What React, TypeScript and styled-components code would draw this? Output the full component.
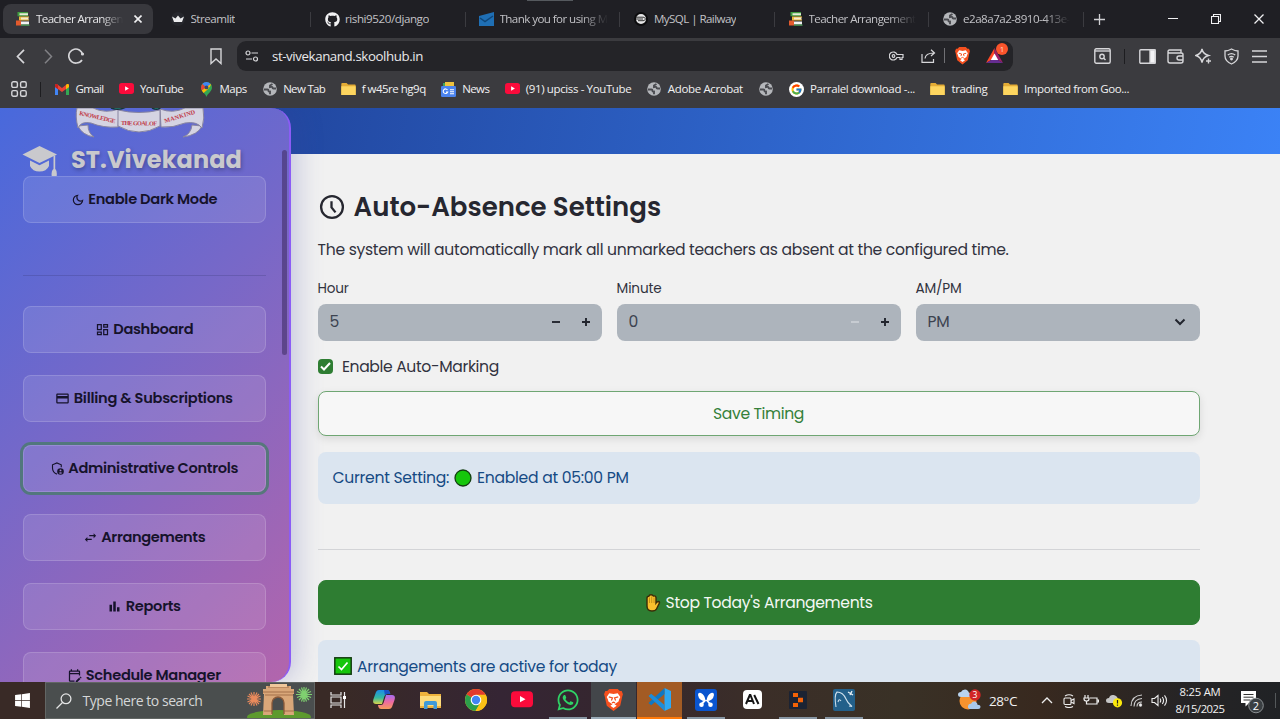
import React, { useLayoutEffect, useRef, useState } from "react";
import styled, { createGlobalStyle, css } from "styled-components";
import { FaGithub, FaWhatsapp, FaWindows } from "react-icons/fa";
import { FcGoogle } from "react-icons/fc";
import {
  MdOutlineDarkMode,
  MdOutlineDashboard,
  MdCreditCard,
  MdSwapHoriz,
  MdBarChart,
  MdOutlineEditCalendar,
} from "react-icons/md";

const appFont = `Poppins, Inter, "Open Sans", sans-serif`;
const uiFont = `"Segoe UI", "Open Sans", "Noto Sans", sans-serif`;

const GlobalStyle = createGlobalStyle`
  * { box-sizing: border-box; }
  body { margin: 0; background: #f1f1f1; overflow: hidden; }
  svg { display: block; flex: none; }
`;

/* ---------- text that keeps a set width ---------- */

const Line = styled.span`
  display: inline-block;
  flex: none;
  white-space: pre;
`;

function Fit({ w, children }: { w: number; children: string }) {
  const ref = useRef<HTMLSpanElement>(null);
  const [spacing, setSpacing] = useState(0);
  useLayoutEffect(() => {
    if (ref.current) {
      const natural = ref.current.getBoundingClientRect().width;
      setSpacing((w - natural) / children.length);
    }
  }, []);
  return (
    <Line ref={ref} style={{ letterSpacing: `${spacing}px` }}>
      {children}
    </Line>
  );
}

/* ---------- page shell ---------- */

const Screen = styled.div`
  width: 1280px;
  height: 719px;
  display: flex;
  flex-direction: column;
  overflow: hidden;
  font-family: ${uiFont};
`;

/* ---------- browser chrome ---------- */

const TabStrip = styled.div`
  position: relative;
  height: 38px;
  flex: none;
  display: flex;
  align-items: center;
  padding: 0 0 0 3px;
  background: #1f1f24;
  color: #c2c2c6;
  font-size: 11.6px;
  &::before {
    content: "";
    position: absolute;
    top: 0;
    left: 527px;
    width: 46px;
    height: 1px;
    background: #55595e;
  }
`;

const Tab = styled.div<{ $active?: boolean; $line?: boolean }>`
  width: 154.5px;
  height: 30px;
  flex: none;
  display: flex;
  align-items: center;
  ${(p) =>
    p.$active &&
    css`
      width: 150px;
      margin-right: 4.5px;
      border-radius: 8px;
      background: #38383d;
      color: #e6e6e8;
    `}
  &::after {
    content: "";
    width: 1px;
    height: 15px;
    margin-left: auto;
    margin-right: 1px;
    background: ${(p) => (p.$line ? "#3b3b40" : "transparent")};
  }
`;

const TabIcon = styled.span`
  width: 14px;
  margin: 0 6px 0 13px;
  display: flex;
  justify-content: center;
`;

const TabTitle = styled.span<{ $w: number; $fade?: boolean }>`
  width: ${(p) => p.$w}px;
  padding-bottom: 2px;
  overflow: hidden;
  display: flex;
  ${(p) =>
    p.$fade &&
    css`
      mask-image: linear-gradient(90deg, #000 75%, transparent);
    `}
`;

const CloseSlot = styled.span`
  margin-left: 11px;
`;

const WindowButtons = styled.div`
  margin-left: auto;
  display: flex;
`;

const WindowButton = styled.span`
  width: 43px;
  display: flex;
  align-items: center;
  justify-content: center;
`;

const NewTab = styled.span`
  margin-left: 9px;
`;

const Toolbar = styled.div`
  height: 36px;
  flex: none;
  display: flex;
  align-items: center;
  padding: 0 6px 0 6.500px;
  background: #3b3b3f;
`;

const ToolSlot = styled.span<{ $push?: number }>`
  width: 28px;
  flex: none;
  display: flex;
  justify-content: center;
  margin-left: ${(p) => p.$push ?? 0}px;
`;

const AddressBar = styled.div`
  width: 776px;
  height: 30px;
  margin-left: 7.500px;
  padding-left: 8px;
  display: flex;
  align-items: center;
  border-radius: 9px;
  background: #242428;
  color: #e9e9eb;
  font-size: 13.3px;
`;

const AddressText = styled.span`
  margin-left: 13px;
`;

const AddressTools = styled.div`
  margin-left: auto;
  display: flex;
  align-items: center;
  padding-right: 5px;
`;

const AddressTool = styled.span<{ $w: number }>`
  position: relative;
  width: ${(p) => p.$w}px;
  display: flex;
  justify-content: center;
`;

const Badge = styled.span`
  position: absolute;
  top: -5px;
  right: 0;
  width: 12px;
  height: 12px;
  border-radius: 6px;
  background: #fb542b;
  color: #ffd9cc;
  font-size: 8px;
  line-height: 12px;
  text-align: center;
`;

const VerticalRule = styled.span<{ $color: string }>`
  width: 1px;
  height: 15px;
  flex: none;
  background: ${(p) => p.$color};
`;

const Bookmarks = styled.div`
  height: 34px;
  flex: none;
  display: flex;
  align-items: center;
  padding: 0 0 4px 11px;
  background: #3b3b3f;
  color: #f1f1f2;
  font-size: 11.5px;
`;

const BookmarkList = styled.div`
  display: flex;
  gap: 15.55px;
  margin-left: 0.5px;
`;

const Bookmark = styled.span`
  display: flex;
  align-items: center;
  gap: 6px;
`;

const BookmarkLabel = styled.span`
  line-height: 16px;
  padding-bottom: 0.5px;
`;

const BookmarkIcon = styled.span`
  width: 15px;
  display: flex;
  justify-content: center;
`;

/* ---------- web page ---------- */

const Page = styled.div`
  height: 574px;
  flex: none;
  display: flex;
  overflow: hidden;
  font-family: ${appFont};
  background: linear-gradient(100deg, #21469e 20%, #3b82f6 100%) 0 0 / 100% 46px no-repeat, #f1f1f1;
`;

const Sidebar = styled.aside`
  position: relative;
  width: 291px;
  height: 574px;
  flex: none;
  padding: 0 24px 0 22.500px;
  overflow: hidden;
  border-right: 2px solid #8b5cf6;
  border-radius: 0 20px 20px 0;
  background: linear-gradient(135deg, #4869dc 0%, #7768c8 45%, #b365ac 100%);
`;

const SidebarShade = styled.div`
  display: flex;
  flex: none;
  border-radius: 0 20px 20px 0;
  box-shadow: 4px 0 28px rgba(60, 70, 160, 0.28);
`;

const Crest = styled.div`
  height: 31px;
  margin-left: 52.500px;
`;

const Brand = styled.div`
  height: 37px;
  display: flex;
  align-items: flex-start;
  color: #c9c9cd;
  font-size: 24px;
  font-weight: 700;
  line-height: 30px;
  text-shadow: 1px 2px 4px rgba(0, 0, 0, 0.28);
`;

const BrandName = styled.span`
  margin: 6px 0 0 13.500px;
`;

const CapSlot = styled.span`
  margin: 7px 0 0 -1px;
`;

const NavDivider = styled.div`
  height: 1px;
  width: 243px;
  margin: 52px 0 30px;
  background: rgba(50, 50, 110, 0.25);
`;

const NavList = styled.nav`
  display: flex;
  flex-direction: column;
  gap: 22.3px;
`;

const NavButton = styled.div<{ $focused?: boolean }>`
  height: 47px;
  width: 243px;
  flex: none;
  display: flex;
  align-items: center;
  justify-content: center;
  gap: 3.5px;
  border: 1px solid rgba(255, 255, 255, 0.15);
  border-radius: 8px;
  background: rgba(255, 255, 255, 0.1);
  color: #16132b;
  font-size: 14.6px;
  font-weight: 600;
  ${(p) =>
    p.$focused &&
    css`
      box-shadow: 0 0 0 3px rgba(75, 122, 112, 0.85);
    `}
`;

const ScrollThumb = styled.div`
  position: absolute;
  top: 42px;
  right: 2px;
  width: 5px;
  height: 205px;
  border-radius: 3px;
  background: rgba(70, 50, 110, 0.65);
`;

const Content = styled.main`
  width: 908.500px;
  padding-left: 26.600px;
  padding-top: 46px;
  color: #31333f;
  font-size: 15.6px;
`;

const Heading = styled.h2`
  display: flex;
  align-items: center;
  gap: 9px;
  height: 40px;
  margin: 33px 0 0;
  font-size: 26px;
  font-weight: 600;
  color: #262730;
`;

const Lead = styled.p`
  height: 24px;
  line-height: 24px;
  margin: 11px 0 0;
`;

const Fields = styled.div`
  display: grid;
  grid-template-columns: 1fr 1fr 1fr;
  gap: 15px;
  margin-top: 17px;
`;

const Field = styled.div`
  display: flex;
  flex-direction: column;
`;

const FieldLabel = styled.label`
  height: 24.5px;
  line-height: 20px;
  font-size: 13.6px;
`;

const Control = styled.div`
  height: 37.5px;
  display: flex;
  align-items: center;
  padding: 0 11px 1px 12px;
  border-radius: 8px;
  background: #adb4bc;
  color: #3c4350;
`;

const Steppers = styled.span<{ $inset?: number }>`
  margin-left: auto;
  margin-right: ${(p) => p.$inset ?? 0}px;
  display: flex;
  gap: 20px;
`;

const CheckRow = styled.label`
  display: flex;
  align-items: center;
  gap: 9.3px;
  height: 24px;
  margin-top: 13px;
`;

const CheckBox = styled.span`
  width: 15px;
  height: 15px;
  border-radius: 4px;
  display: flex;
  align-items: center;
  justify-content: center;
  background: #2e7d32;
`;

const Button = styled.div<{ $filled?: boolean }>`
  height: 45px;
  display: flex;
  align-items: center;
  justify-content: center;
  gap: 5px;
  margin-top: ${(p) => (p.$filled ? 30 : 12.5)}px;
  border: 1px solid ${(p) => (p.$filled ? "#2e7d32" : "#6fa673")};
  border-radius: 8px;
  background: ${(p) => (p.$filled ? "#2e7d32" : "#f7f7f7")};
  color: ${(p) => (p.$filled ? "#f4f8f4" : "#34803a")};
  box-shadow: ${(p) => (p.$filled ? "none" : "0 3px 9px rgba(0,0,0,0.1)")};
`;

const Notice = styled.div<{ $gap: number; $indent: number }>`
  height: 52px;
  display: flex;
  align-items: center;
  margin-top: ${(p) => p.$gap}px;
  padding-left: ${(p) => p.$indent}px;
  gap: 5px;
  border-radius: 8px;
  background: #dbe5f0;
  color: #154a84;
`;

const Divider = styled.div`
  height: 1px;
  margin-top: 45.5px;
  background: #d3d4d7;
`;

/* ---------- taskbar ---------- */

const Taskbar = styled.footer`
  height: 37px;
  flex: none;
  display: flex;
  align-items: stretch;
  background: linear-gradient(90deg, #392a26 0, #392a26 340px, #352534 500px, #35262f 600px, #3b2e28 760px, #393126 900px, #38291f 1040px, #262425 1180px, #202225 1280px);
  color: #f2f2f2;
`;

const StartButton = styled.div`
  width: 45px;
  display: flex;
  align-items: center;
  justify-content: center;
`;

const SearchBox = styled.div`
  width: 270px;
  display: flex;
  align-items: center;
  padding-left: 10px;
  background: #4a4e4e;
  border: 1px solid #626664;
  color: #d5d7d7;
  font-size: 14px;
`;

const SearchText = styled.span`
  margin-left: 10.5px;
`;

const SearchArt = styled.span`
  margin-left: auto;
  align-self: flex-end;
`;

const TaskSlot = styled.div<{ $bg?: string; $line?: string; $wide?: boolean }>`
  width: 46px;
  flex: none;
  display: flex;
  flex-direction: column;
  align-items: center;
  justify-content: space-between;
  background: ${(p) => p.$bg ?? "transparent"};
  background-clip: content-box;
  padding-right: ${(p) => (p.$bg ? 1 : 0)}px;
  &::after {
    content: "";
    width: ${(p) => (p.$wide ? "100%" : "38px")};
    height: 2px;
    background: ${(p) => p.$line ?? "transparent"};
  }
`;

const TaskIcon = styled.span`
  height: 36px;
  display: flex;
  align-items: center;
`;

const Tray = styled.div`
  margin-left: auto;
  display: flex;
  align-items: center;
  font-size: 13.5px;
`;

const TraySlot = styled.span<{ $w: number }>`
  width: ${(p) => p.$w}px;
  flex: none;
  display: flex;
  justify-content: center;
`;

const Temperature = styled(TraySlot)`
  margin-right: 12px;
`;

const ClockStack = styled.div`
  width: 60px;
  margin-left: 2px;
  padding-bottom: 2px;
  display: flex;
  flex-direction: column;
  align-items: center;
  font-size: 11.3px;
  line-height: 17px;
`;

/* ---------- drawings ---------- */

const stroke = { fill: "none", stroke: "#d6d6d9", strokeWidth: 1.4 };

const Books = () => (
  <svg width="14" height="14" viewBox="0 0 14 14">
    <path d="M3 1h9v3H3z" fill="#e4ecd8" />
    <path d="M1.500 0h10.500v1.300H3.500v2H12v1H1.500z" fill="#3f9b3f" />
    <path d="M4 5h8.500v3H4z" fill="#f3ead0" />
    <path d="M3 4.500h10v1H5v2h8v1H3z" fill="#e8b93b" />
    <path d="M2 9.500h11v3H2z" fill="#f2f2f2" />
    <path d="M0 8.500h5v5H0z" fill="#e35a2d" />
    <path d="M5 12.500h8.500v1.300H5z" fill="#4a9a54" />
  </svg>
);

const Crown = () => (
  <svg width="14" height="14" viewBox="0 0 14 14">
    <circle cx="7" cy="7" r="7" fill="#26272d" />
    <path d="M1 4.500l3.500 2L7 3.500l2.500 3 3.500-2-2 5.500H3z" fill="#ececee" />
  </svg>
);

const Mail = () => (
  <svg width="15" height="14" viewBox="0 0 15 14">
    <path d="M0 4L15 0v14H0z" fill="#1f6fb5" />
    <path d="M1 6l5 3.500L14 4" fill="none" stroke="#0e4679" strokeWidth="1.500" />
  </svg>
);

const Railway = () => (
  <svg width="14" height="14" viewBox="0 0 14 14">
    <circle cx="7" cy="7" r="6" fill="#e6e6e8" stroke="#0c0c0e" strokeWidth="2" />
    <path d="M2 5.200h7c3 0 3 3.500 0 3.500H4M2 7h7" fill="none" stroke="#333" strokeWidth="1" />
  </svg>
);

const Globe = () => (
  <svg width="14" height="14" viewBox="0 0 14 14">
    <circle cx="7" cy="7" r="6.800" fill="#b4b6ba" />
    <path d="M1 7.500h3.500q1 0 1 1.200t1.500 1v2.500M13 6.500h-2.500q-1 0-1-1T7 5V3.500L9.500 2" fill="none" stroke="#4a4b50" strokeWidth="1.900" />
  </svg>
);

const YouTube = ({ w = 15 }: { w?: number }) => (
  <svg width={w} height={w * 0.74} viewBox="0 0 22 16">
    <rect width="22" height="16" rx="4" fill="#fb0b3b" />
    <path d="M9 4.800v6.400L14.500 8z" fill="#fff" />
  </svg>
);

const Folder = () => (
  <svg width="15" height="12.500" viewBox="0 0 15 13">
    <path d="M1 0h4.500L7 1.600h7a1 1 0 011 1V12a1 1 0 01-1 1H1a1 1 0 01-1-1V1a1 1 0 011-1z" fill="#e4ac35" />
    <path d="M0 3.400h15V12a1 1 0 01-1 1H1a1 1 0 01-1-1z" fill="#fdd55f" />
  </svg>
);

const Gmail = () => (
  <svg width="14" height="11" viewBox="0 0 14 11">
    <path d="M0 1.500V11h3V5z" fill="#4285f4" />
    <path d="M14 1.500V11h-3V5z" fill="#34a853" />
    <path d="M0 1.500C0 0 1.500-.4 2.500.5L7 4 11.500.5C12.500-.4 14 0 14 1.500V3L7 8 0 3z" fill="#ea4335" />
    <path d="M11 1l.5-.5C12.500-.4 14 0 14 1.500V3l-3 2.200z" fill="#fbbc04" />
    <path d="M0 1.500C0 0 1.500-.4 2.500.5L3 1v4.200L0 3z" fill="#c5221f" />
  </svg>
);

const MapPin = () => (
  <svg width="11" height="15" viewBox="0 0 11 15">
    <path d="M5.500 15C5 12 0 9.500 0 5.500A5.500 5.500 0 0111 5.500C11 9.500 6 12 5.500 15z" fill="#34a853" />
    <path d="M1.300 2L5.500 5.500 9.600 1.900A5.500 5.500 0 001.300 2z" fill="#4285f4" />
    <path d="M1.300 2L5 5.500.8 8.500C-.3 6.500-.2 4 1.300 2z" fill="#ea4335" />
    <path d="M.8 8.500L9.600 1.900C10.500 3 8 6 6 8L2.500 11z" fill="#fbbc04" />
    <circle cx="5.500" cy="5.400" r="1.900" fill="#3a4a6b" />
  </svg>
);

const NewsIcon = () => (
  <svg width="15" height="15" viewBox="0 0 15 15">
    <path d="M2 1h11v5H2z" fill="#3fa45b" />
    <path d="M4 0h9v5H4z" fill="#edc13d" />
    <rect y="4" width="15" height="11" rx="1.200" fill="#4b83ee" />
    <path d="M6.500 8A2.300 2.300 0 106.700 10H5M9 7.700h4M9 9.700h4M9 11.700h4" fill="none" stroke="#fff" strokeWidth="1.100" />
  </svg>
);

const GoogleBadge = () => (
  <svg width="15" height="15" viewBox="0 0 15 15">
    <circle cx="7.500" cy="7.500" r="7.500" fill="#fff" />
    <g transform="translate(1.500 1.500)">
      <FcGoogle size={12} />
    </g>
  </svg>
);

const BraveLion = ({ size }: { size: number }) => (
  <svg width={size} height={size * 1.16} viewBox="0 0 18 21">
    <path d="M5 0h8l2 2 1.800 0L18 5l-.6 2-2 9L9 21l-6.400-5-2-9L0 5l1.200-3L3 2z" fill="#f5501f" />
    <path d="M5 4l4 .8L13 4l2.500 3.600-1 2L13.800 12 10 14.500 12 16l-3 2-3-2 2-1.500L4.200 12l-.7-2.400-1-2z" fill="#fff" />
    <path d="M4.500 7.500L8 8.500 7 11M13.500 7.500L10 8.500 11 11M7.500 13.200L9 12.500l1.500.7" stroke="#f5501f" strokeWidth="1.200" fill="none" />
  </svg>
);

const BatTriangle = () => (
  <svg width="17" height="15" viewBox="0 0 17 15">
    <path d="M8.500 0L0 15l8.500-5z" fill="#ff4724" />
    <path d="M8.500 0L17 15l-8.500-5z" fill="#9e1f63" />
    <path d="M0 15h17l-8.500-5z" fill="#662d91" />
    <path d="M8.500 5.500L4.800 12h7.400z" fill="#fff" />
  </svg>
);

const Ribbon = () => (
  <svg width="130" height="31" viewBox="0 0 130 31">
    <g fill="#d5d4e2" stroke="#8885a0" strokeWidth="1">
      <path d="M3 18Q7 27 19 29Q13 25 13 17z" />
      <path d="M127 18Q123 27 108 29Q116 26 117 17z" />
      <path d="M2 0Q0 8 3 20Q6 13 16 15Q28 20 43 19L44 1Q30 6 18 0z" />
      <path d="M128 0Q130 10 127 20Q122 13 110 15Q98 20 86 19L85 1Q98 6 110 0z" />
      <path d="M43 2Q64 7 85 2L85 18Q64 30 43 18z" />
    </g>
    <path d="M36 0q8 3 15-1M77 0q6 3 9-1" fill="#2a9d8f" stroke="#17353a" strokeWidth="1.500" />
    <g fill="#c03a48" fontFamily="Liberation Serif, serif" fontWeight="700" fontSize="6.200">
      <text x="4" y="7" transform="rotate(13 4 7)" textLength="37">KNOWLEDGE</text>
      <text x="46" y="17" transform="rotate(1 46 17)" textLength="36">THE GOAL OF</text>
      <text x="90" y="15" transform="rotate(-17 90 15)" textLength="32">MANKIND</text>
    </g>
  </svg>
);

const GradCap = () => (
  <svg width="36" height="33" viewBox="0 0 36 33" fill="#c9c9cd">
    <path d="M17.500 0L35 8.500 17.500 17 .5 8.500z" />
    <path d="M8 14.500l9.500 4.700 9.500-4.700v5.500q-2.500 5.500-9.500 5.500T8 20z" />
    <path d="M31.500 10l1.700-.8V23q2 1.500 1.500 7h-5q-.5-5.500 1.800-7z" />
  </svg>
);

const ShieldPerson = () => (
  <svg width="15" height="15" viewBox="0 0 24 24">
    <path d="M11 21Q4 18 4 11V6l7-3 7 3v4" fill="none" stroke="currentColor" strokeWidth="1.800" />
    <circle cx="16.800" cy="16.800" r="5.300" fill="currentColor" />
    <circle cx="16.800" cy="15" r="1.500" fill="#9a7dca" />
    <path d="M14 19.200q2.800-2.400 5.600 0-2.800 2.500-5.600 0z" fill="#9a7dca" />
  </svg>
);

const ClockFace = () => (
  <svg width="27" height="26" viewBox="0 0 27 26" fill="none" stroke="#262730" strokeWidth="2.300">
    <circle cx="14" cy="13" r="10.900" />
    <path d="M13.500 7.200v6.200l4 5" />
  </svg>
);

const Minus = ({ faded }: { faded?: boolean }) => (
  <svg width="10" height="10" viewBox="0 0 10 10">
    <path d="M1 5h8" stroke={faded ? "#d6dadf" : "#22252e"} strokeWidth={faded ? 1.3 : 1.9} />
  </svg>
);

const Plus = () => (
  <svg width="10" height="10" viewBox="0 0 10 10">
    <path d="M1 5h8M5 1v8" stroke="#22252e" strokeWidth="1.900" />
  </svg>
);

const Hand = () => (
  <svg width="16" height="18" viewBox="0 0 16 18">
    <path d="M2 4q0-1.800 1.800-1.800Q4.200.8 6 .8T8.300 2Q10.500 1.300 11 3.500V9q1-1.500 2.700-1.500 1.500.6.300 2.300L11.500 15q-1 2-4.500 2-5 0-5-5z" fill="#fbc02d" stroke="#3a2c08" strokeWidth="1.400" />
    <path d="M4.500 3.500V9M6.700 2.500V9M9 3.500V9" stroke="#b98512" strokeWidth=".8" />
  </svg>
);

const GreenCheck = () => (
  <svg width="18" height="18" viewBox="0 0 18 18">
    <rect x=".8" y=".8" width="16.400" height="16.400" fill="#16c60c" stroke="#143d12" strokeWidth="1.500" />
    <path d="M4.500 9.500l3 3 6-7" fill="none" stroke="#fff" strokeWidth="1.700" />
  </svg>
);

const IndiaGate = () => (
  <svg width="68" height="35" viewBox="0 0 68 35">
    <ellipse cx="33" cy="34" rx="32" ry="7" fill="#5d9a2e" />
    <path d="M20 3h25v3h3v5h-1l1 21H38V20a6 6 0 00-12 0v12H17l1-21h-1V6h3z" fill="#d9a779" />
    <path d="M17 9h31M19 12h28M22 4h21M18 28h8M38 28h10" stroke="#a4704a" strokeWidth="1.200" />
    <path d="M26 31V20a6 6 0 0112 0v11" fill="none" stroke="#8b5a3a" strokeWidth="1.300" />
    <path d="M24 1h17v3H24z" fill="#efc79b" />
    <g stroke="#e98a5c" strokeWidth="1.200">
      <path d="M8 9v14M1 16h14M3 11l10 10M13 11L3 21M5 9.500l6 13M11 9.500l-6 13M1.500 13l13 6M14.500 13l-13 6" />
    </g>
    <g stroke="#7fd070" strokeWidth="1.200">
      <path d="M58 4v15M50 11.500h16M53 6l10 11M63 6L53 17M55.500 4.500l5 14M60.500 4.500l-5 14M51 8.500l14 6M65 8.500l-14 6" />
    </g>
  </svg>
);

const TaskView = () => (
  <svg width="17" height="16" viewBox="0 0 17 16" fill="none" stroke="#e6e6e6" strokeWidth="1.200">
    <path d="M1 0v3h10V0M1 5h10v6H1zM1 16v-3h10v3M14.500 0v16" />
    <path d="M13 4h3v3h-3z" fill="#fff" stroke="none" />
  </svg>
);

const Copilot = () => (
  <svg width="22" height="21" viewBox="0 0 22 21">
    <defs>
      <linearGradient id="cpA" x1="0" y1="0" x2="0" y2="1">
        <stop offset="0" stopColor="#1c8ce8" />
        <stop offset=".55" stopColor="#35b9a0" />
        <stop offset="1" stopColor="#d9d34a" />
      </linearGradient>
      <linearGradient id="cpB" x1="0" y1="0" x2="0" y2="1">
        <stop offset="0" stopColor="#a56cf2" />
        <stop offset=".5" stopColor="#ee6aa0" />
        <stop offset="1" stopColor="#f79b5a" />
      </linearGradient>
    </defs>
    <path d="M6 1h8q2 0 2.700 2l.6 2H14q-2 0-2.700 2.500L9 15H3q-4 0-2.500-5L3 3q.8-2 3-2z" fill="url(#cpA)" />
    <path d="M16 20H8q-2 0-2.600-2L5 16h3q2 0 2.700-2.500L13 6h6q4 0 2.500 5L19 18q-.8 2-3 2z" fill="url(#cpB)" />
    <path d="M11 1h3q2 0 2.700 2l.6 2H14q-1.500 0-2 1.500z" fill="#1b51c8" />
  </svg>
);

const Explorer = () => (
  <svg width="21" height="18" viewBox="0 0 21 18">
    <path d="M0 1h7l2 2h12v14H0z" fill="#eeb23c" />
    <path d="M0 5h21v10H0z" fill="#fddb7b" />
    <path d="M4 18v-6q0-2 2-2h9q2 0 2 2v6h-3.500v-4h-6v4z" fill="#3f9ad8" />
  </svg>
);

const Chrome = () => (
  <svg width="22" height="22" viewBox="0 0 22 22">
    <circle cx="11" cy="11" r="11" fill="#fbc116" />
    <path d="M11 11L1.500 5.500A11 11 0 0120.500 5.500z" fill="#e33b2e" />
    <path d="M1.500 5.500A11 11 0 0010.500 22L15.500 13.500 11 11z" fill="#2c9f4b" />
    <path d="M11 5.800h9.700A11 11 0 0110.500 22l5-8.500z" fill="#fbc116" />
    <circle cx="11" cy="11" r="5.300" fill="#fff" />
    <circle cx="11" cy="11" r="4.200" fill="#4285f4" />
  </svg>
);

const VsCode = () => (
  <svg width="23" height="23" viewBox="0 0 23 23">
    <path d="M16.500 0L23 3v17l-6.500 3z" fill="#2fa8f2" />
    <path d="M16.500 0v6L3.200 17.200 .5 15z" fill="#1178c2" />
    <path d="M16.500 23v-6L3.200 5.800.5 8z" fill="#1c8ddb" />
  </svg>
);

const Butterfly = () => (
  <svg width="22" height="22" viewBox="0 0 22 22">
    <rect width="22" height="22" rx="3" fill="#0a55cf" />
    <path d="M10.500 12Q4 12 3 6q0-3 3-2 4 2 4.500 8zM11.500 12Q12 6 16 4q3-1 3 2-1 6-7.500 6z" fill="#fff" />
    <circle cx="6.500" cy="15.800" r="2.300" fill="#fff" />
    <circle cx="15.500" cy="15.800" r="2.300" fill="#fff" />
    <path d="M10.500 11L6 15.500M11.500 11l4 4.500" stroke="#fff" strokeWidth="1.800" />
  </svg>
);

const AiTile = () => (
  <svg width="19" height="19" viewBox="0 0 19 19">
    <rect width="19" height="19" rx="4" fill="#fff" />
    <path d="M3 14L6.800 5h.6L11 14M4.500 11h5M11.200 5L15.500 14" fill="none" stroke="#151515" strokeWidth="2" />
  </svg>
);

const Replit = () => (
  <svg width="18" height="18" viewBox="0 0 18 18">
    <rect width="18" height="18" rx="1" fill="#1b2333" />
    <path d="M4 2h5v4H4zM9 6.700h5v4.500H9zM4 12h5v4H4z" fill="#f26207" />
  </svg>
);

const Workbench = () => (
  <svg width="22" height="22" viewBox="0 0 22 22">
    <rect width="22" height="22" rx="2" fill="#23608a" />
    <path d="M3 18Q1 6 4 3q6 0 9 7 1.500 4 6 7.500l-3-.5M5 13Q6 9 8 12" fill="none" stroke="#cfe0ec" strokeWidth="1.100" />
    <path d="M15 3l5 3M19 2l-2 4" stroke="#e7f0f6" strokeWidth="1.300" />
  </svg>
);

const Weather = () => (
  <svg width="24" height="24" viewBox="0 0 24 24">
    <circle cx="10" cy="12" r="8.500" fill="#f7922d" />
    <path d="M3 8q-3 0-3-2.500T3 3q1-2.500 4-2.500T11 4q3 .5 2 4z" fill="#b9d3ee" />
    <path d="M12 20q-2.500-.5-2-3t3-2.300q1.500-3 4.500-2 2 1 2 3 3 0 3 2.300t-3 2z" fill="#a9c8ea" />
    <circle cx="17" cy="6" r="5.700" fill="#d12626" />
    <text x="17" y="8.900" fontSize="8.500" fontFamily="Open Sans, sans-serif" fill="#fff" textAnchor="middle">3</text>
  </svg>
);

const NoticeBubble = () => (
  <svg width="25" height="26" viewBox="0 0 25 26">
    <path d="M1 3h15v12H9l-3.500 3.500V15H1z" fill="#fff" />
    <path d="M3.500 6.500h10M3.500 9.200h10M3.500 12h7" stroke="#333" strokeWidth="1" />
    <circle cx="16" cy="17.500" r="7.300" fill="#3a3f42" stroke="#8b9093" />
    <text x="16" y="21.500" fontSize="11" fontFamily="Open Sans, sans-serif" fill="#fff" textAnchor="middle">2</text>
  </svg>
);

/* ---------- data ---------- */

const tabs = [
  { icon: <Crown />, title: "Streamlit", w: 44.5, line: true },
  { icon: <FaGithub size={15} color="#f1f1f3" />, title: "rishi9520/django", w: 84, line: true },
  { icon: <Mail />, title: "Thank you for using M", w: 108, line: true, fade: true },
  { icon: <Railway />, title: "MySQL | Railway", w: 82, line: true },
  { icon: <Books />, title: "Teacher Arrangement", w: 107, line: true, fade: true },
  { icon: <Globe />, title: "e2a8a7a2-8910-413e-", w: 107, line: true, fade: true },
];

const bookmarks = [
  { icon: <Gmail />, label: "Gmail", w: 28 },
  { icon: <YouTube />, label: "YouTube", w: 43 },
  { icon: <MapPin />, label: "Maps", w: 27 },
  { icon: <Globe />, label: "New Tab", w: 42 },
  { icon: <Folder />, label: "f w45re hg9q", w: 64 },
  { icon: <NewsIcon />, label: "News", w: 27 },
  { icon: <YouTube />, label: "(91) upciss - YouTube", w: 105.5 },
  { icon: <Globe />, label: "Adobe Acrobat", w: 75 },
  { icon: <Globe /> },
  { icon: <GoogleBadge />, label: "Parralel download -...", w: 105 },
  { icon: <Folder />, label: "trading", w: 36 },
  { icon: <Folder />, label: "Imported from Goo...", w: 105 },
];

const navItems = [
  { icon: <MdOutlineDashboard size={15} />, label: "Dashboard", w: 80 },
  { icon: <MdCreditCard size={15} />, label: "Billing & Subscriptions", w: 159 },
  { icon: <ShieldPerson />, label: "Administrative Controls", w: 170, focused: true },
  { icon: <MdSwapHoriz size={15} />, label: "Arrangements", w: 104 },
  { icon: <MdBarChart size={15} />, label: "Reports", w: 55 },
  { icon: <MdOutlineEditCalendar size={15} />, label: "Schedule Manager", w: 135 },
];

const underline = "#8796a3";
const apps = [
  { icon: <TaskView /> },
  { icon: <Copilot /> },
  { icon: <Explorer /> },
  { icon: <Chrome /> },
  { icon: <YouTube w={22} /> },
  { icon: <FaWhatsapp size={24} color="#2fd366" />, line: underline },
  { icon: <BraveLion size={19} />, bg: "#43464a", line: "#9aabb8", wide: true },
  { icon: <VsCode />, bg: "#a35b24", line: "#ff7a0a", wide: true },
  { icon: <Butterfly />, line: underline },
  { icon: <AiTile /> },
  { icon: <Replit />, line: underline },
  { icon: <Workbench />, line: underline },
];

/* ---------- sections ---------- */

const BrowserChrome = () => (
  <>
    <TabStrip>
      <Tab $active>
        <TabIcon><Books /></TabIcon>
        <TabTitle $w={87} $fade><Fit w={87}>Teacher Arrangen</Fit></TabTitle>
        <CloseSlot>
          <svg width="8" height="8" viewBox="0 0 8 8"><path d="M.5.5l7 7M7.500.5l-7 7" stroke="#f0f0f2" strokeWidth="1.600" /></svg>
        </CloseSlot>
      </Tab>
      {tabs.map((t) => (
        <Tab key={t.title} $line={t.line}>
          <TabIcon>{t.icon}</TabIcon>
          <TabTitle $w={t.w} $fade={t.fade}><Fit w={t.w}>{t.title}</Fit></TabTitle>
        </Tab>
      ))}
      <NewTab>
        <svg width="11" height="11" viewBox="0 0 11 11"><path d="M5.500 0v11M0 5.500h11" stroke="#d0d0d3" strokeWidth="1.300" /></svg>
      </NewTab>
      <WindowButtons>
        <WindowButton>
          <svg width="10" height="10" viewBox="0 0 10 10"><path d="M0 4.500h10" stroke="#f0f0f2" /></svg>
        </WindowButton>
        <WindowButton>
          <svg width="10" height="10" viewBox="0 0 10 10" fill="none" stroke="#f0f0f2" strokeWidth="1.100"><path d="M.5 2.500h7v7h-7zM2.500 2.500v-2h7v7h-2" /></svg>
        </WindowButton>
        <WindowButton>
          <svg width="10" height="10" viewBox="0 0 10 10"><path d="M.5.5l9 9M9.500.5l-9 9" stroke="#f0f0f2" strokeWidth="1.300" /></svg>
        </WindowButton>
      </WindowButtons>
    </TabStrip>
    <Toolbar>
      <ToolSlot><svg width="9" height="15" viewBox="0 0 9 15" {...stroke} strokeWidth="1.700"><path d="M8 .8L1.500 7.500 8 14.200" /></svg></ToolSlot>
      <ToolSlot><svg width="9" height="15" viewBox="0 0 9 15" {...stroke} stroke="#828286" strokeWidth="1.500"><path d="M1 .8l6.500 6.700L1 14.200" /></svg></ToolSlot>
      <ToolSlot>
        <svg width="17" height="16" viewBox="0 0 17 16" {...stroke} strokeWidth="1.700">
          <path d="M14.500 6A7 7 0 108.500 15 7 7 0 0014 12" />
          <circle cx="14.500" cy="6" r="1.600" fill="#d6d6d9" stroke="none" />
        </svg>
      </ToolSlot>
      <ToolSlot $push={111}><svg width="12" height="17" viewBox="0 0 12 17" {...stroke}><path d="M1 1h10v14.500L6 11l-5 4.500z" /></svg></ToolSlot>
      <AddressBar>
        <svg width="14" height="12" viewBox="0 0 14 12" {...stroke} strokeWidth="1.200"><circle cx="3" cy="3" r="2" /><path d="M6.500 3H13M1 9h6" /><circle cx="10.500" cy="9" r="2" /></svg>
        <AddressText><Fit w={151}>st-vivekanand.skoolhub.in</Fit></AddressText>
        <AddressTools>
          <AddressTool $w={31}>
            <svg width="15" height="10" viewBox="0 0 15 10" {...stroke} strokeWidth="1.200"><path d="M8 3.500h6v3h-1V8.500h-2V6.500H8A4 4 0 118 3.500z" /><circle cx="4.500" cy="5" r="1.300" /></svg>
          </AddressTool>
          <AddressTool $w={32}>
            <svg width="15" height="14" viewBox="0 0 15 14" {...stroke} strokeWidth="1.200"><path d="M1 5v8.300h11.500V10M4 9.500Q4.500 4 13 4M10 .8L13.500 4 10 7" /></svg>
          </AddressTool>
          <VerticalRule $color="#707074" />
          <AddressTool $w={35}><BraveLion size={15} /></AddressTool>
          <AddressTool $w={28}><BatTriangle /><Badge>1</Badge></AddressTool>
        </AddressTools>
      </AddressBar>
      <ToolSlot $push={75}>
        <svg width="17" height="16" viewBox="0 0 17 16" {...stroke}><rect x=".8" y=".8" width="15.400" height="14.400" rx="1.500" /><path d="M1 3h15" /><circle cx="8" cy="8.500" r="2.200" /><path d="M9.500 10l2 2" /></svg>
      </ToolSlot>
      <ToolSlot $push={-6}><VerticalRule $color="#1d1d20" /></ToolSlot>
      <ToolSlot $push={-5}>
        <svg width="17" height="15" viewBox="0 0 17 15" {...stroke}><rect x=".8" y=".8" width="15.400" height="13.400" rx="1" /><path d="M11 1h5v13h-5z" fill="#f3f3f5" /></svg>
      </ToolSlot>
      <ToolSlot>
        <svg width="17" height="15" viewBox="0 0 17 15" {...stroke}><path d="M1 3.500V12q0 2 2 2h11q2 0 2-2V5.500q0-1.500-2-1.500H2.500Q1 4 1 2.500T2.500 1H14v3M16 7h-4q-2 0-2 2t2 2h4" /></svg>
      </ToolSlot>
      <ToolSlot>
        <svg width="17" height="17" viewBox="0 0 17 17" {...stroke}><path d="M7 1q1 5 6.500 6.500Q8 9 7 14.500 6 9 .8 7.500 6 6 7 1zM13.500 10.500v5M11 13h5" /></svg>
      </ToolSlot>
      <ToolSlot>
        <svg width="15" height="17" viewBox="0 0 15 17" {...stroke} strokeWidth="1.300"><path d="M7.500 1Q11 3 14 3v5q0 5-6.500 8Q1 13 1 8V3q3 0 6.500-2zM3.800 7q3.700-2.800 7.400 0M5.200 9.200q2.300-1.500 4.600 0" /><circle cx="7.500" cy="11" r=".8" fill="#d6d6d9" /></svg>
      </ToolSlot>
      <ToolSlot><svg width="15" height="13" viewBox="0 0 15 13" {...stroke} strokeWidth="1.500"><path d="M0 1h15M0 6.500h15M0 12h15" /></svg></ToolSlot>
    </Toolbar>
    <Bookmarks>
      <svg width="16" height="16" viewBox="0 0 16 16" {...stroke}>
        <rect x=".8" y=".8" width="5.600" height="5.600" rx="1.500" /><rect x="9.600" y=".8" width="5.600" height="5.600" rx="1.500" />
        <rect x=".8" y="9.600" width="5.600" height="5.600" rx="1.500" /><rect x="9.600" y="9.600" width="5.600" height="5.600" rx="1.500" />
      </svg>
      <ToolSlot $push={-1}><VerticalRule $color="#1d1d20" /></ToolSlot>
      <BookmarkList>
        {bookmarks.map((b, i) => (
          <Bookmark key={i}>
            <BookmarkIcon>{b.icon}</BookmarkIcon>
            {b.label && <BookmarkLabel><Fit w={b.w!}>{b.label}</Fit></BookmarkLabel>}
          </Bookmark>
        ))}
      </BookmarkList>
    </Bookmarks>
  </>
);

const SideMenu = () => (
  <SidebarShade>
    <Sidebar>
      <Crest><Ribbon /></Crest>
      <Brand>
        <CapSlot><GradCap /></CapSlot>
        <BrandName><Fit w={171}>ST.Vivekanad</Fit></BrandName>
      </Brand>
      <NavButton>
        <MdOutlineDarkMode size={14} />
        <Fit w={129}>Enable Dark Mode</Fit>
      </NavButton>
      <NavDivider />
      <NavList>
        {navItems.map(({ icon, label, w, focused }) => (
          <NavButton key={label} $focused={focused}>
            {icon}
            <Fit w={w}>{label}</Fit>
          </NavButton>
        ))}
      </NavList>
      <ScrollThumb />
    </Sidebar>
  </SidebarShade>
);

const Settings = () => (
  <Content>
    <Heading><ClockFace /><Fit w={307.5}>Auto-Absence Settings</Fit></Heading>
    <Lead><Fit w={691}>The system will automatically mark all unmarked teachers as absent at the configured time.</Fit></Lead>
    <Fields>
      <Field>
        <FieldLabel><Fit w={31}>Hour</Fit></FieldLabel>
        <Control>5<Steppers><Minus /><Plus /></Steppers></Control>
      </Field>
      <Field>
        <FieldLabel><Fit w={45}>Minute</Fit></FieldLabel>
        <Control>0<Steppers><Minus faded /><Plus /></Steppers></Control>
      </Field>
      <Field>
        <FieldLabel><Fit w={46}>AM/PM</Fit></FieldLabel>
        <Control>
          <Fit w={22}>PM</Fit>
          <Steppers $inset={3}>
            <svg width="12" height="8" viewBox="0 0 12 8"><path d="M1.500 1.500L6 6l4.500-4.500" fill="none" stroke="#22252e" strokeWidth="2" /></svg>
          </Steppers>
        </Control>
      </Field>
    </Fields>
    <CheckRow>
      <CheckBox><svg width="11" height="9" viewBox="0 0 11 9"><path d="M1 4.500L4 7.500 10 1" fill="none" stroke="#fff" strokeWidth="2" /></svg></CheckBox>
      <Fit w={157}>Enable Auto-Marking</Fit>
    </CheckRow>
    <Button><Fit w={91}>Save Timing</Fit></Button>
    <Notice $gap={16} $indent={15}>
      <Fit w={116.5}>Current Setting:</Fit>
      <svg width="18" height="18" viewBox="0 0 18 18"><circle cx="9" cy="9" r="8" fill="#16c60c" stroke="#143d12" strokeWidth="1.300" /></svg>
      <Fit w={151.5}>Enabled at 05:00 PM</Fit>
    </Notice>
    <Divider />
    <Button $filled><Hand /><Fit w={207}>Stop Today's Arrangements</Fit></Button>
    <Notice $gap={15} $indent={16.5}><GreenCheck /><Fit w={260}>Arrangements are active for today</Fit></Notice>
  </Content>
);

const WindowsTaskbar = () => (
  <Taskbar>
    <StartButton><FaWindows size={17} color="#fff" /></StartButton>
    <SearchBox>
      <svg width="16" height="16" viewBox="0 0 16 16" fill="none" stroke="#e4e5e5" strokeWidth="1.300"><circle cx="10" cy="5.800" r="4.900" /><path d="M6.500 9.500L.5 15.500" /></svg>
      <SearchText><Fit w={120}>Type here to search</Fit></SearchText>
      <SearchArt><IndiaGate /></SearchArt>
    </SearchBox>
    {apps.map((a, i) => (
      <TaskSlot key={i} $bg={a.bg} $line={a.line} $wide={a.wide}><TaskIcon>{a.icon}</TaskIcon></TaskSlot>
    ))}
    <Tray>
      <TraySlot $w={30}><Weather /></TraySlot>
      <Temperature $w={36}><Fit w={28}>28°C</Fit></Temperature>
      <TraySlot $w={28}>
        <svg width="12" height="7" viewBox="0 0 12 7" fill="none" stroke="#eee" strokeWidth="1.300"><path d="M1 6l5-5 5 5" /></svg>
      </TraySlot>
      <TraySlot $w={16}>
        <svg width="12" height="14" viewBox="0 0 12 14" fill="none" stroke="#eee" strokeWidth="1.100"><path d="M2 2q4-2.500 8 0M2 12.500q4 2 8 0" /><rect x="1" y="4" width="7" height="6.500" rx="1" /><path d="M8 6.500l3-1.500v4.500L8 8" /></svg>
      </TraySlot>
      <TraySlot $w={28}>
        <svg width="16" height="11" viewBox="0 0 16 11" fill="none" stroke="#eee" strokeWidth="1.200"><path d="M7 3h7v6H7M14 5h1.500v2H14M2 0v3M5 0v3M1 3h5v1q0 2-2.500 2T1 4zM3.500 6v3H7" /></svg>
      </TraySlot>
      <TraySlot $w={18}>
        <svg width="17" height="14" viewBox="0 0 17 14"><path d="M3 9Q0 9 0 6.500T3 4q1-3.500 4.500-3T12 5v4z" fill="#c6c6c6" /><circle cx="11.500" cy="8.800" r="4.600" fill="#fbe80c" /><path d="M11.500 6v3.500M11.500 10.500v1.300" stroke="#222" strokeWidth="1.200" /></svg>
      </TraySlot>
      <TraySlot $w={27}>
        <svg width="13" height="13" viewBox="0 0 13 13" fill="none" stroke="#d0d0d0" strokeWidth="1.100"><path d="M1 12Q1.500 1.500 12 1M4 12.500Q4 5 12 4.500M7 12.500Q7 8 12 8" /><circle cx="10.500" cy="11" r="1.200" fill="#fff" /></svg>
      </TraySlot>
      <TraySlot $w={18}>
        <svg width="17" height="13" viewBox="0 0 17 13" fill="none" stroke="#eee" strokeWidth="1.100"><path d="M1 4.500h2.500L7 1.500v10l-3.500-3H1zM9 4.500q1.500 2 0 4M11.300 3q2.500 3.500 0 7M13.500 1.300q4 5 0 10.400" /></svg>
      </TraySlot>
      <ClockStack>
        <Fit w={41}>8:25 AM</Fit>
        <Fit w={49}>8/15/2025</Fit>
      </ClockStack>
      <TraySlot $w={45}><NoticeBubble /></TraySlot>
      <VerticalRule $color="#54585a" />
      <TraySlot $w={4} />
    </Tray>
  </Taskbar>
);

export default function App() {
  return (
    <Screen>
      <GlobalStyle />
      <BrowserChrome />
      <Page>
        <SideMenu />
        <Settings />
      </Page>
      <WindowsTaskbar />
    </Screen>
  );
}
